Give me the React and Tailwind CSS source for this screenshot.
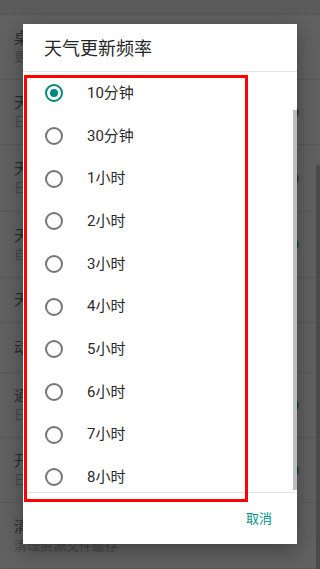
import React, { useState } from 'react'

const bgRows = [
  { title: '桌面小部件', sub: '更新桌面小部件样式', h: 'h-[65px]' },
  { title: '天气通知', sub: '日常天气通知栏显示', h: 'h-[65px]', sw: 'off' },
  { title: '天气预警', sub: '日常天气预警提醒', h: 'h-[67px]', sw: 'off' },
  { title: '天气自动更新', sub: '自动在后台更新天气', h: 'h-[66px]', sw: 'on' },
  { title: '天气更新频率', h: 'h-[45px]' },
  { title: '动画效果', h: 'h-[50px]' },
  { title: '通知栏天气', sub: '日常显示通知栏天气', h: 'h-[65px]', sw: 'on' },
  { title: '开机自启动', sub: '日常开机自动启动', h: 'h-[65px]', sw: 'on' },
  { title: '清除缓存', sub: '清理资源文件缓存', h: 'h-[66px]' },
]

const options = ['10分钟', '30分钟', '1小时', '2小时', '3小时', '4小时', '5小时', '6小时', '7小时', '8小时']

const Radio = ({ checked }) => (
  <span
    className={`flex h-[18px] w-[18px] shrink-0 items-center justify-center rounded-full border-2 ${checked ? 'border-[#00897b]' : 'border-[#757575]'}`}
  >
    {checked && <span className="h-[8px] w-[8px] rounded-full bg-[#00897b]" />}
  </span>
)

const App = () => {
  const [selected, setSelected] = useState(0)

  return (
    <div
      className="relative h-[569px] w-[320px] overflow-hidden bg-[#616161]"
      style={{ fontFamily: 'Roboto, "Noto Sans CJK SC", sans-serif' }}
    >
      {/* settings list under the dim */}
      <div className="h-[15px] border-b border-[#575757] bg-[#5b5b5b]" />
      {bgRows.map((row) => (
        <div
          key={row.title}
          className={`flex items-center justify-between border-b border-[#585858] pl-[14px] pr-[21px] ${row.h}`}
        >
          <div className="flex flex-col">
            <span className="text-[15px] leading-[20px] text-[#2b2b2b]">{row.title}</span>
            {row.sub && <span className="text-[13px] leading-[18px] text-[#474747]">{row.sub}</span>}
          </div>
          {row.sw && (
            <span
              className={`h-[15px] w-[34px] rounded-full ${row.sw === 'on' ? 'bg-[#0e4f48]' : 'bg-[#3a3a3a]'}`}
            />
          )}
        </div>
      ))}
      <div className="absolute right-0 top-[165px] h-[404px] w-[4px] bg-[#4b4b4b]" />

      {/* dialog */}
      <div className="absolute left-[23px] top-[24px] flex h-[520px] w-[274px] flex-col bg-white shadow-[0_6px_20px_rgba(0,0,0,0.35)]">
        <div className="flex h-[48px] shrink-0 items-center border-b border-[#e4e4e4] pl-[21px] pt-[2px]">
          <span className="text-[18px] text-[#262626]">天气更新频率</span>
        </div>
        <div className="relative flex-1 overflow-hidden">
          {options.map((opt, i) => (
            <button
              key={opt}
              type="button"
              onClick={() => setSelected(i)}
              className="flex h-[42.67px] w-full items-center pl-[22px] text-left"
            >
              <Radio checked={selected === i} />
              <span className="ml-[24px] text-[15px] text-[#2a2a2a]">{opt}</span>
            </button>
          ))}
          <div className="absolute right-0 top-[38px] h-[380px] w-[4px] bg-[#bdbdbd]" />
        </div>
        <div className="flex h-[52px] shrink-0 items-center justify-end border-t border-[#e4e4e4] pr-[25px]">
          <span className="text-[13px] text-[#009688]">取消</span>
        </div>
      </div>

      {/* red highlight box */}
      <div className="pointer-events-none absolute left-[24px] top-[75px] h-[427px] w-[224px] border-[3px] border-[#ff0000]" />
    </div>
  )
}

export default App
